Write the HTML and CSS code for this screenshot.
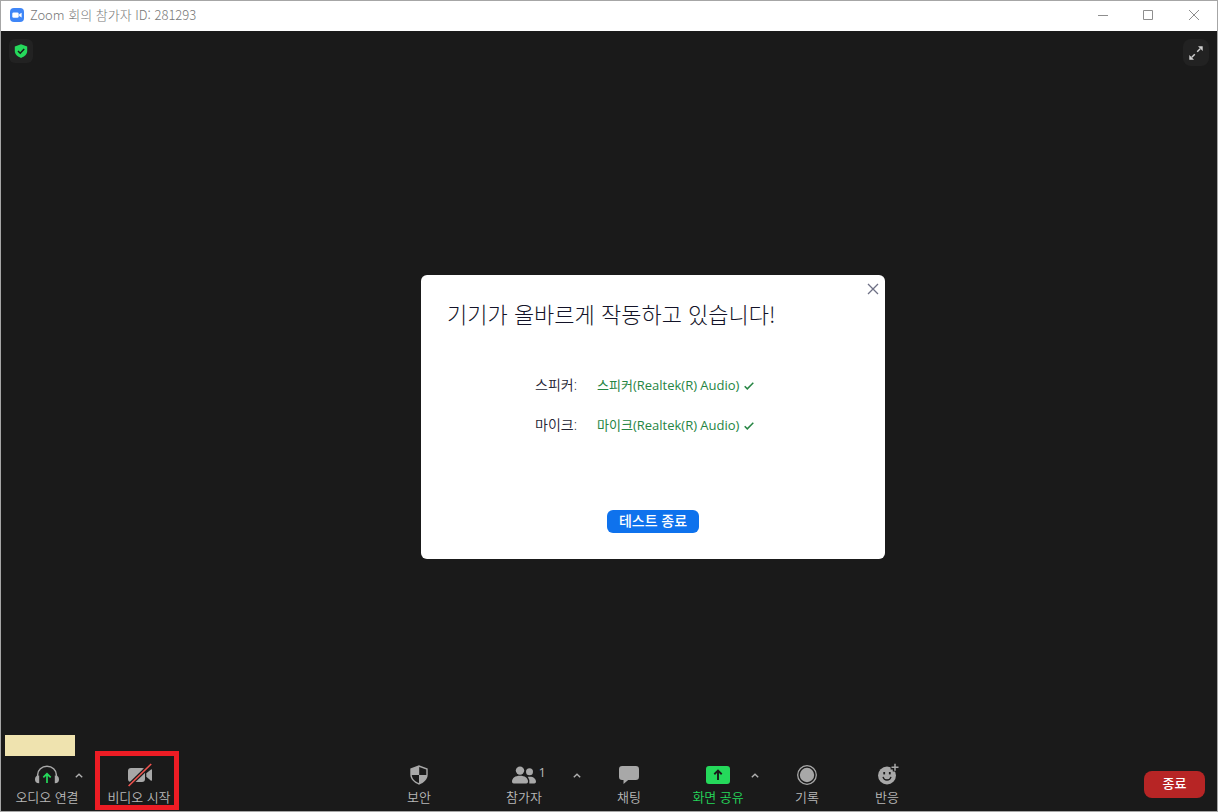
FILE: index.html
```
<!DOCTYPE html>
<html lang="ko">
<head>
<meta charset="utf-8">
<meta name="viewport" content="width=device-width, initial-scale=1">
<title>Zoom 회의</title>
<link rel="stylesheet" href="styles.css">
</head>
<body>
<div class="window">
  <header class="titlebar">
    <svg class="app-icon" viewBox="0 0 14 14" aria-hidden="true"><rect width="14" height="14" rx="4" fill="#3f86f7"/><rect x="2.3" y="4.4" width="6.4" height="5.4" rx="1.4" fill="#fff"/><path d="M9.2 6.3l2.4-1.6v4.8L9.2 7.9z" fill="#fff"/></svg>
    <h1 class="title">Zoom 회의 참가자 ID: 281293</h1>
    <div class="window-controls">
      <button class="window-button" aria-label="최소화"><svg viewBox="0 0 12 12"><path d="M2 6.500h10"/></svg></button>
      <button class="window-button" aria-label="최대화"><svg viewBox="0 0 12 12"><path d="M1.500 1.500h9v9h-9z"/></svg></button>
      <button class="window-button" aria-label="닫기"><svg viewBox="0 0 12 12"><path d="M1 1l10 10M11 1L1 11"/></svg></button>
    </div>
  </header>

  <main class="meeting">
    <div class="topbar">
      <button class="corner-button" aria-label="회의 정보"><svg width="14" height="14" viewBox="0 0 14 14"><path d="M7 0.2L13.2 2.4V7c0 3.2-2.6 5.6-6.2 6.9C3.4 12.6.8 10.2.8 7V2.4z" fill="#25d95b"/><path d="M4 7l2.2 2.2L10.2 5" fill="none" stroke="#1a1a1a" stroke-width="1.5"/></svg></button>
      <button class="corner-button expand" aria-label="전체 화면"><svg width="14" height="14" viewBox="0 0 14 14"><path d="M8.200 5.800l3-3M5.800 8.200l-3 3" stroke="#d0d0d0" stroke-width="1.500"/><path d="M9 .3h4.700V5zM5 13.700H.3V9z" fill="#d0d0d0"/></svg></button>
    </div>

    <div class="stage">
      <section class="dialog" role="dialog" aria-labelledby="dialog-title">
        <button class="dialog-close" aria-label="닫기"><svg width="12" height="12" viewBox="0 0 12 12"><path d="M1 1l10 10M11 1L1 11" stroke="#6e7085" stroke-width="1.3"/></svg></button>
        <h2 class="dialog-title" id="dialog-title">기기가 올바르게 작동하고 있습니다!</h2>
        <dl class="devices">
          <dt>스피커:</dt>
          <dd>스피커(Realtek(R) Audio)<svg class="check" viewBox="0 0 10 10"><path d="M.7 6.300l2.600 2.600L9.300 2.800"/></svg></dd>
          <dt>마이크:</dt>
          <dd>마이크(Realtek(R) Audio)<svg class="check" viewBox="0 0 10 10"><path d="M.7 6.300l2.600 2.600L9.300 2.800"/></svg></dd>
        </dl>
        <button class="finish">테스트 종료</button>
      </section>
      <div class="name-tag"></div>
    </div>

    <footer class="toolbar">
      <div class="group group-left">
        <div class="item item-audio">
          <button class="tool"><svg width="26" height="20" viewBox="0 0 26 20"><path d="M3.6 12V10a9.4 8.8 0 0 1 18.8 0v2" fill="none" stroke="#a8a8a8" stroke-width="1.5"/><path d="M5.2 10.6v7.6C2.2 18.2 1 16.600 1 14.400s1.200-3.800 4.200-3.800zM20.800 10.600v7.600c3 0 4.200-1.600 4.200-3.800s-1.200-3.800-4.200-3.800z" fill="#a8a8a8"/><path d="M13 18V9.500M9.300 12.400L13 8.800l3.700 3.600" fill="none" stroke="#25d95b" stroke-width="1.700"/></svg><span>오디오 연결</span></button>
          <button class="more" aria-label="오디오 옵션"><svg viewBox="0 0 8 5"><path d="M.8 4.300L4 1.200l3.200 3.100"/></svg></button>
        </div>
        <div class="item item-video">
          <button class="tool"><svg width="26" height="24" viewBox="0 0 26 24"><rect x="2" y="5" width="17" height="14" rx="3" fill="#a8a8a8"/><path d="M20.300 10.300L25 6.500q1-.5 1 .6v10q0 1.100-1 .6l-4.700-3.900z" fill="#a8a8a8"/><path d="M2.600 23L25.200 1" stroke="#1a1a1a" stroke-width="4"/><path d="M2.600 23L25.200 1" stroke="#f0544f" stroke-width="1.600"/></svg><span>비디오 시작</span></button>
        </div>
      </div>

      <div class="group group-center">
        <div class="item">
          <button class="tool"><svg width="20" height="20" viewBox="0 0 20 20"><path d="M10 .3l8.700 3.100v6.200c0 4.700-3.600 8.200-8.700 10.100C4.900 17.800 1.300 14.300 1.300 9.600V3.400z" fill="#a8a8a8"/><path d="M10.200 2v7.900h7.100V4.500zM10 9.900v8.200c-3.800-1.500-6.900-4.200-7.200-8.200z" fill="#1a1a1a"/></svg><span>보안</span></button>
        </div>
        <div class="item item-people">
          <button class="tool"><svg width="26" height="20" viewBox="0 0 26 20"><circle cx="9" cy="5.600" r="4.200" fill="#a8a8a8"/><path d="M1 16.800c0-4 3.300-6 8-6s8 2 8 6q0 1.700-1.700 1.700H2.700Q1 18.500 1 16.800z" fill="#a8a8a8"/><circle cx="18.500" cy="6.800" r="3.500" fill="#a8a8a8"/><path d="M16.800 11.800c5-.8 8.200 1.400 8.200 5q0 1.700-1.700 1.700h-5q.6-4-1.500-6.700z" fill="#a8a8a8"/></svg><span>참가자</span><span class="count">1</span></button>
          <button class="more" aria-label="참가자 옵션"><svg viewBox="0 0 8 5"><path d="M.8 4.300L4 1.200l3.200 3.100"/></svg></button>
        </div>
        <div class="item">
          <button class="tool"><svg width="20" height="20" viewBox="0 0 20 20"><path d="M3.200 1h13.600Q20 1 20 4.200v7.600q0 3.200-3.200 3.200H9.200L4.500 19v-4H3.200Q0 15 0 11.800V4.200Q0 1 3.200 1z" fill="#a8a8a8"/></svg><span>채팅</span></button>
        </div>
        <div class="item item-share">
          <button class="tool"><svg width="24" height="20" viewBox="0 0 24 20"><rect y="1" width="24" height="18" rx="3" fill="#25d95b"/><path d="M12 15V6.500M8.300 9.200L12 5.600l3.700 3.600" fill="none" stroke="#1a1a1a" stroke-width="1.900"/></svg><span>화면 공유</span></button>
          <button class="more" aria-label="화면 공유 옵션"><svg viewBox="0 0 8 5"><path d="M.8 4.300L4 1.200l3.200 3.100"/></svg></button>
        </div>
        <div class="item">
          <button class="tool"><svg width="20" height="20" viewBox="0 0 20 20"><circle cx="10" cy="10" r="9.300" fill="none" stroke="#a8a8a8" stroke-width="1.300"/><circle cx="10" cy="10" r="7.200" fill="#a8a8a8"/></svg><span>기록</span></button>
        </div>
        <div class="item">
          <button class="tool"><svg width="24" height="24" viewBox="0 0 24 24"><circle cx="12" cy="12.500" r="9" fill="#a8a8a8"/><path d="M20 0v8.500M15.600 4.300h8.800" stroke="#1a1a1a" stroke-width="4.500"/><path d="M20 .8v7M16.500 4.300h7" stroke="#a8a8a8" stroke-width="1.500"/><rect x="8.300" y="9" width="1.800" height="2.400" fill="#1a1a1a"/><rect x="13.900" y="9" width="1.800" height="2.400" fill="#1a1a1a"/><path d="M8 13.800q.8 3.200 4 3.200t4-3.200" fill="none" stroke="#1a1a1a" stroke-width="1.300"/></svg><span>반응</span></button>
        </div>
      </div>

      <div class="group group-right">
        <button class="leave">종료</button>
      </div>
    </footer>
  </main>
</div>
</body>
</html>
```
FILE: styles.css
```
*,
*::after {
  box-sizing: border-box;
}

body {
  margin: 0;
  font-family: "Open Sans", "Noto Sans CJK KR", sans-serif;
  font-size: 13px;
  font-weight: 350;
  line-height: 18px;
}

button {
  padding: 0;
  border: 0;
  background: none;
  color: inherit;
  font: inherit;
  cursor: pointer;
}

svg {
  display: block;
  flex: none;
}

.window {
  display: flex;
  flex-direction: column;
  min-height: 100vh;
  border: 1px solid #a6a6a6;
  background: #1a1a1a;
}

.titlebar {
  display: flex;
  align-items: center;
  gap: 6px;
  height: 30px;
  padding: 0 0 2px 9px;
  background: #fff;
  color: #777;
}

.app-icon {
  width: 14px;
  height: 14px;
}

.title {
  margin: 0;
  font-family: "Noto Sans CJK KR", sans-serif;
  font-size: 13px;
  font-weight: 300;
}

.window-controls {
  display: flex;
  margin-left: auto;
}

.window-button {
  display: grid;
  place-items: center;
  width: 46px;
  height: 28px;
}

.window-button svg {
  width: 12px;
  height: 12px;
  fill: none;
  stroke: #8e8e8e;
}

.meeting {
  display: flex;
  flex: 1;
  flex-direction: column;
}

.topbar {
  display: flex;
  align-items: flex-start;
  justify-content: space-between;
  height: 46px;
  padding: 8px;
}

.corner-button {
  display: grid;
  place-items: center;
  width: 24px;
  height: 24px;
  border-radius: 6px;
  background: #222;
}

.expand {
  width: 26px;
  height: 27px;
  border-radius: 8px;
}

.stage {
  position: relative;
  display: grid;
  flex: 1;
  place-items: center;
  padding-left: 88px;
}

.dialog {
  position: relative;
  display: flex;
  flex-direction: column;
  width: 464px;
  padding: 26px;
  border-radius: 6px;
  background: #fff;
  color: #232333;
}

.dialog-close {
  position: absolute;
  top: 4px;
  right: 2px;
  display: grid;
  place-items: center;
  width: 20px;
  height: 20px;
}

.dialog-title {
  margin: 0;
  color: #131328;
  font-family: "Noto Sans CJK KR", sans-serif;
  font-size: 22px;
  font-weight: 300;
  line-height: 24px;
}

.devices {
  display: grid;
  grid-template-columns: 130px 1fr;
  gap: 20px;
  margin: 50px 0 75px;
  line-height: 20px;
}

.devices dt {
  font-size: 14px;
  text-align: right;
}

.devices dd {
  display: flex;
  align-items: center;
  gap: 5px;
  margin: 0;
  color: #268543;
  font-weight: 400;
}

.check {
  width: 10px;
  height: 10px;
  fill: none;
  stroke: #268543;
  stroke-width: 1.5;
}

.finish {
  align-self: center;
  height: 23px;
  padding: 0 12px 2px;
  border-radius: 6px;
  background: #0e72ed;
  color: #fff;
  font-size: 14px;
  font-weight: 500;
  line-height: 20px;
}

.name-tag {
  position: absolute;
  bottom: 1px;
  left: 4px;
  width: 70px;
  height: 21px;
  background: #efe3af;
}

.toolbar {
  display: flex;
  height: 54px;
  color: #b8b8b8;
}

.group {
  display: flex;
}

.group-left {
  width: 187px;
}

.group-center {
  flex: 1;
  justify-content: center;
}

.group-right {
  align-items: center;
  justify-content: flex-end;
  width: 99px;
  padding-right: 12px;
}

.item {
  position: relative;
  display: flex;
  justify-content: center;
  width: 80px;
}

.item-audio {
  width: 92px;
}

.item-video {
  width: 92px;
}

.item-video::after {
  position: absolute;
  top: -6px;
  left: 2px;
  width: 84px;
  height: 59px;
  border: 5px solid #ed1c24;
  content: "";
  pointer-events: none;
}

.item-people {
  width: 130px;
}

.item-share {
  width: 98px;
}

.item-share .tool {
  color: #25d95b;
}

.tool {
  position: relative;
  display: grid;
  grid-template-rows: 24px 18px;
  align-content: center;
  justify-items: center;
  row-gap: 1px;
  padding-top: 1px;
  white-space: nowrap;
}

.tool svg {
  align-self: center;
}

.count {
  position: absolute;
  top: 6px;
  right: -4px;
  font-weight: 400;
}

.more {
  position: absolute;
  top: 11px;
  right: 0;
  display: grid;
  place-items: center;
  width: 24px;
  height: 14px;
}

.item-audio .more {
  right: 2px;
}

.more svg {
  width: 8px;
  height: 5px;
  fill: none;
  stroke: #b0b0b0;
  stroke-width: 1.4;
}

.leave {
  width: 61px;
  height: 27px;
  padding-bottom: 2px;
  border-radius: 8px;
  background: #b72525;
  color: #fff;
  font-weight: 500;
}
```
